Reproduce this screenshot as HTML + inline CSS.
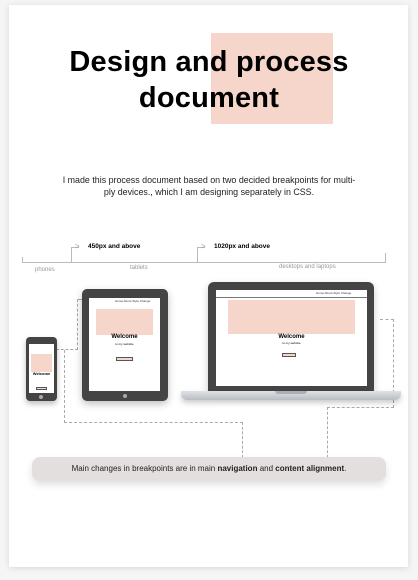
<!DOCTYPE html>
<html><head><style>
*{margin:0;padding:0;box-sizing:border-box}
body{width:418px;height:580px;background:#f5f5f5;position:relative;overflow:hidden;font-family:"Liberation Sans",sans-serif}
.card{position:absolute;left:9px;top:5px;width:399px;height:562px;background:#fff;box-shadow:0 1px 6px rgba(0,0,0,.12)}
.a{position:absolute}
.t{position:absolute;white-space:nowrap}
.dl{position:absolute;border-color:#aaa;border-style:dashed;border-width:0}
.scr{position:absolute;background:#fff}
.pk{position:absolute;background:#f6d6ca}
</style></head><body>
<div class="card"></div>
<div class="pk" style="left:211px;top:33px;width:122px;height:91px"></div>
<div class="t" style="left:0;width:418px;text-align:center;top:44px;font-size:29px;font-weight:bold;line-height:36px;color:#000;letter-spacing:0.2px">Design and process<br>document</div>
<div class="t" style="left:0;width:418px;text-align:center;top:174px;font-size:8.9px;line-height:12px;color:#222">I made this process document based on two decided breakpoints for multi-<br>ply devices., which I am designing separately in CSS.</div>
<!-- timeline -->
<div class="a" style="left:22px;top:262px;width:364px;height:1px;background:#bbb"></div>
<div class="a" style="left:22px;top:257px;width:1px;height:6px;background:#bbb"></div>
<div class="a" style="left:71px;top:247px;width:1px;height:16px;background:#bbb"></div>
<div class="a" style="left:71px;top:247px;width:8px;height:1px;background:#bbb"></div>
<div class="t" style="left:75px;top:242px;font-size:8px;color:#999">&gt;</div>
<div class="a" style="left:197px;top:247px;width:1px;height:16px;background:#bbb"></div>
<div class="a" style="left:197px;top:247px;width:8px;height:1px;background:#bbb"></div>
<div class="t" style="left:201px;top:242px;font-size:8px;color:#999">&gt;</div>
<div class="a" style="left:385px;top:253px;width:1px;height:10px;background:#bbb"></div>
<div class="t" style="left:88px;top:243px;font-size:6.5px;font-weight:bold">450px and above</div>
<div class="t" style="left:214px;top:243px;font-size:6.5px;font-weight:bold">1020px and above</div>
<div class="t" style="left:35px;top:267px;font-size:6px;color:#999">phones</div>
<div class="t" style="left:130px;top:265px;font-size:6px;color:#999">tablets</div>
<div class="t" style="left:279px;top:264px;font-size:6px;color:#999">desktops and laptops</div>
<!-- dashed -->
<div class="dl" style="left:56px;top:349px;width:22px;border-top-width:1px"></div>
<div class="dl" style="left:77px;top:299px;height:51px;border-left-width:1px"></div>
<div class="dl" style="left:77px;top:299px;width:6px;border-top-width:1px"></div>
<div class="dl" style="left:64px;top:350px;height:73px;border-left-width:1px"></div>
<div class="dl" style="left:64px;top:422px;width:179px;border-top-width:1px"></div>
<div class="dl" style="left:242px;top:422px;height:36px;border-left-width:1px"></div>
<div class="dl" style="left:380px;top:319px;width:14px;border-top-width:1px"></div>
<div class="dl" style="left:393px;top:319px;height:89px;border-left-width:1px"></div>
<div class="dl" style="left:327px;top:407px;width:67px;border-top-width:1px"></div>
<div class="dl" style="left:327px;top:407px;height:51px;border-left-width:1px"></div>
<!-- phone -->
<div class="a" style="left:26px;top:337px;width:31px;height:64px;background:#444;border-radius:4px;box-shadow:0 3px 6px rgba(0,0,0,.25)"></div>
<div class="scr" style="left:29px;top:344px;width:25px;height:49px"></div>
<div class="pk" style="left:31px;top:354px;width:21px;height:18px"></div>
<div class="t" style="left:29px;top:371px;width:25px;text-align:center;font-size:4px;font-weight:bold">Welcome</div>
<div class="pk" style="left:36px;top:387px;width:11px;height:3px;border:0.5px solid #555"></div>
<div class="a" style="left:39px;top:395px;width:4px;height:4px;border-radius:50%;background:#aaa"></div>
<!-- tablet -->
<div class="a" style="left:82px;top:289px;width:86px;height:112px;background:#444;border-radius:5px;box-shadow:0 3px 8px rgba(0,0,0,.25)"></div>
<div class="scr" style="left:89px;top:298px;width:71px;height:93px"></div>
<div class="t" style="left:115px;top:299px;font-size:3px;color:#333">Home About Style Change</div>
<div class="pk" style="left:96px;top:309px;width:57px;height:26px"></div>
<div class="t" style="left:89px;top:334px;width:71px;text-align:center;font-size:6px;font-weight:bold">Welcome</div>
<div class="t" style="left:89px;top:342px;width:71px;text-align:center;font-size:3px">to my website</div>
<div class="pk" style="left:116px;top:357px;width:17px;height:4px;border:0.5px solid #555"></div>
<div class="a" style="left:123px;top:394px;width:4px;height:4px;border-radius:50%;background:#aaa"></div>
<!-- laptop -->
<div class="a" style="left:208px;top:282px;width:166px;height:110px;background:#444;border-radius:6px 6px 0 0;box-shadow:0 3px 8px rgba(0,0,0,.2)"></div>
<div class="scr" style="left:216px;top:290px;width:151px;height:96px"></div>
<div class="a" style="left:216px;top:297px;width:151px;height:0.5px;background:#777"></div>
<div class="t" style="left:316px;top:291px;font-size:3px;color:#333">Home About Style Change</div>
<div class="pk" style="left:228px;top:300px;width:127px;height:34px"></div>
<div class="t" style="left:216px;top:334px;width:151px;text-align:center;font-size:6px;font-weight:bold">Welcome</div>
<div class="t" style="left:216px;top:341px;width:151px;text-align:center;font-size:3px">to my website</div>
<div class="pk" style="left:282px;top:353px;width:14px;height:4px;border:0.5px solid #555"></div>
<div class="a" style="left:181px;top:391px;width:220px;height:9px;background:linear-gradient(#dfe2e5,#b9bdc2);border-radius:0 0 6px 6px;box-shadow:0 3px 6px rgba(0,0,0,.2)"></div>
<div class="a" style="left:275px;top:391px;width:32px;height:3px;background:#aab0b5;border-radius:0 0 3px 3px"></div>
<!-- pill -->
<div class="a" style="left:32px;top:457px;width:354px;height:24px;background:#e4dfdf;border-radius:8px;box-shadow:0 4px 8px rgba(0,0,0,.12);font-size:8px;line-height:24px;text-align:center;color:#222">Main changes in breakpoints are in main <b>navigation</b> and <b>content alignment</b>.</div>
</body></html>
